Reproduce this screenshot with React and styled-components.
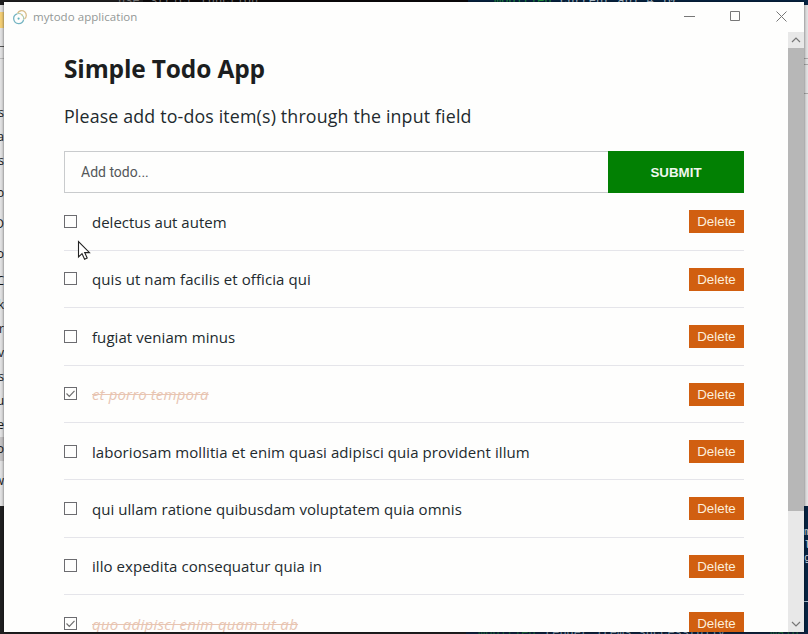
import React from "react";
import styled, { createGlobalStyle, css } from "styled-components";

const GlobalStyle = createGlobalStyle`
  *, *::before, *::after { box-sizing: border-box; }
  html, body { margin: 0; padding: 0; overflow: hidden; }
  body { font-family: "Open Sans", "Noto Sans", sans-serif; color: #222a2e; }
`;

/* The app window sits in the centre cell; thin slices of other windows frame it. */
const Desktop = styled.div`
  display: grid;
  grid-template: 2px 630px 2px / 4px 800px 4px;
  width: 808px;
  height: 634px;
  overflow: hidden;
  background: #212122;
`;

const CodeRow = styled.div`
  display: flex;
  grid-column: 1 / -1;
  overflow: hidden;
`;

const Code = styled.span`
  flex: none;
  width: ${(p) => p.$w}px;
  overflow: hidden;
  white-space: pre;
  font: 12px/2px "Liberation Mono", monospace;
  background: ${(p) => p.$bg};
  color: ${(p) => p.$color};
`;

const SideColumn = styled.div`
  display: flex;
  flex-direction: column;
  overflow: hidden;
`;

const Slice = styled.div`
  display: flex;
  align-items: center;
  flex: none;
  height: ${(p) => p.$h}px;
  overflow: hidden;
  background: ${(p) => p.$bg || "#e2e2e3"};
  justify-content: ${(p) => (p.$mono ? "flex-start" : "flex-end")};
  font: ${(p) => (p.$mono ? '11px/13px "Liberation Mono", monospace' : '12px/16px "Open Sans", sans-serif')};
  color: ${(p) => (p.$mono ? "#c8d4df" : "#161616")};
`;

const AppWindow = styled.div`
  position: relative;
  display: flex;
  flex-direction: column;
  background: #fefefd;
  overflow: hidden;
  box-shadow: 0 0 3px rgba(0, 0, 0, 0.6);
`;

const TitleBar = styled.header`
  display: flex;
  align-items: center;
  flex: none;
  height: 30px;
  padding-left: 9px;
`;

const WindowTitle = styled.span`
  flex: 1;
  margin-left: 5px;
  font-size: 11.5px;
  line-height: 16px;
  letter-spacing: 0.05px;
  color: #939896;
`;

const WindowButton = styled.button`
  display: flex;
  align-items: center;
  justify-content: center;
  width: 46px;
  height: 30px;
  padding: 0 0 2px;
  border: 0;
  background: none;
  color: #777;
`;

const Body = styled.div`
  display: flex;
  flex: 1;
  min-height: 0;
`;

const Page = styled.main`
  flex: 1;
  padding: 20px 44px 0 60px;
  overflow: hidden;
`;

const Heading = styled.h1`
  margin: 0;
  height: 36px;
  font-size: 24.5px;
  font-weight: 700;
  line-height: 33px;
  letter-spacing: -0.15px;
  color: #1c1e20;
  white-space: nowrap;
`;

const Intro = styled.p`
  margin: 13px 0 20px;
  height: 30px;
  font-size: 17.8px;
  line-height: 30px;
  letter-spacing: 0.16px;
  white-space: nowrap;
`;

const Form = styled.form`
  display: flex;
  height: 42px;
`;

const TodoInput = styled.input`
  flex: 1;
  min-width: 0;
  padding: 0 16px;
  border: 1px solid #c9cbcd;
  border-right: 0;
  border-radius: 0;
  outline: 0;
  background: #fefefd;
  font: 14px "Roboto", sans-serif;
  color: #333;
  &::placeholder { color: #54575a; opacity: 1; }
`;

const Submit = styled.button`
  width: 136px;
  padding: 0;
  border: 0;
  background: #028003;
  font: 700 13.333px "Liberation Sans", sans-serif;
  color: #f0f7ee;
`;

const List = styled.ul`
  margin: 0.4px 0 0;
  padding: 0;
  list-style: none;
`;

const Item = styled.li`
  display: flex;
  align-items: center;
  height: 57.4px;
  border-bottom: 1px solid #e5e5ea;
`;

const Check = styled.span`
  display: flex;
  align-items: center;
  justify-content: center;
  width: 13px;
  height: 13px;
  flex: none;
  border: 1px solid #6c6c70;
  color: #6e6e6e;
`;

const Label = styled.span`
  flex: 1;
  margin-left: 15px;
  padding-top: 1px;
  font-size: 15px;
  line-height: 24px;
  letter-spacing: ${(p) => p.$spacing}px;
  white-space: nowrap;
  ${(p) =>
    p.$done &&
    css`
      font-style: italic;
      color: #e8c5b2;
      text-decoration: line-through;
    `}
`;

const Delete = styled.button`
  width: 55px;
  height: 23px;
  margin-top: 0.5px;
  padding: 0;
  border: 0;
  background: #d15f10;
  font: 13.333px/23px "Liberation Sans", sans-serif;
  color: #fdeedb;
`;

const Scrollbar = styled.div`
  display: flex;
  flex-direction: column;
  width: 16px;
  background: #e8e8e8;
`;

const ScrollArrow = styled.div`
  display: flex;
  align-items: center;
  justify-content: center;
  height: 16px;
  color: #777;
`;

const Thumb = styled.div`
  height: 463px;
  margin-bottom: auto;
  background: #b7b7b7;
`;

const Pointer = styled.svg`
  position: absolute;
  left: 73px;
  top: 238px;
`;

const Logo = () => (
  <svg width="15" height="16" viewBox="0 0 15 16" fill="none">
    <path d="M4.6 4.2A4.6 4.6 0 1 1 11.4 10" stroke="#d9bd8a" strokeWidth="1.3" />
    <path d="M4.2 4.8A5 5 0 1 0 10.6 10.6" stroke="#74b4c2" strokeWidth="1.3" />
    <path d="M4.2 4.8A5 5 0 0 1 10.6 10.6" stroke="#a9c9b1" strokeWidth="1.1" />
    <circle cx="5.6" cy="9.6" r="1.1" fill="#62b2be" />
    <circle cx="8.7" cy="5.8" r=".8" fill="#e3c384" />
  </svg>
);

const Chevron = ({ down }) => (
  <svg width="10" height="8" viewBox="0 0 10 8" fill="none">
    <path d={down ? "M1 2L5 6L9 2" : "M1 6L5 2L9 6"} stroke="currentColor" strokeWidth="1.2" />
  </svg>
);

const todos = [
  { title: "delectus aut autem", spacing: 0 },
  { title: "quis ut nam facilis et officia qui", spacing: 0.09 },
  { title: "fugiat veniam minus", spacing: 0.07 },
  { title: "et porro tempora", done: true, spacing: 0.13 },
  { title: "laboriosam mollitia et enim quasi adipisci quia provident illum", spacing: 0.07 },
  { title: "qui ullam ratione quibusdam voluptatem quia omnis", spacing: 0.05 },
  { title: "illo expedita consequatur quia in", spacing: 0.05 },
  { title: "quo adipisci enim quam ut ab", done: true, spacing: 0.28 },
];

const leftSlices = [
  { h: 3, bg: "#212122" }, { h: 7 }, { h: 16, bg: "#f4cf75" }, { h: 18 }, { h: 1, bg: "#555" },
  { h: 11 }, { h: 1, bg: "#bbb" }, { h: 42 },
  { h: 24, text: "s" }, { h: 24, text: "a" }, { h: 24, text: "s" }, { h: 40, text: "b" },
  { h: 22, text: "D" }, { h: 38, text: "o" }, { h: 16, text: "C" }, { h: 32, text: "k" },
  { h: 16, text: "r" }, { h: 32, text: "v" }, { h: 16, text: "s" }, { h: 32, text: "u" },
  { h: 16, text: "e" }, { h: 4 }, { h: 24, text: "o", bg: "#c5c3c4" }, { h: 40, text: "w" }, { h: 5 },
];

const rightSlices = [
  { h: 3, bg: "#062443" }, { h: 53 }, { h: 1, bg: "#aaa" }, { h: 5 }, { h: 1, bg: "#aaa" },
  { h: 28 }, { h: 1, bg: "#aaa" }, { h: 412 }, { h: 20, bg: "#062443" },
  { h: 13, bg: "#062443", text: "m" }, { h: 13, bg: "#062443", text: "l" },
  { h: 13, bg: "#062443", text: "g" }, { h: 36, bg: "#062443" }, { h: 1, bg: "#a9c0d2" },
  { h: 30, bg: "#062443" },
];

const topCode = [
  { w: 118, bg: "#212122" },
  { w: 25, bg: "#212122", color: "#817f80", text: "use" },
  { w: 325, bg: "#0c0a0b", color: "#817f80", text: " strict function" },
  { w: 26, bg: "#062443" },
  { w: 66, bg: "#062443", color: "#249a41", text: "modified" },
  { w: 248, bg: "#062443", color: "#bccbd8", text: "current api 4 10" },
];

const bottomCode = [
  { w: 466, bg: "#212122" },
  { w: 12, bg: "#102440" },
  { w: 67, bg: "#102440", color: "#21713d", text: "modified" },
  { w: 225, bg: "#102440", color: "#91a4b7", text: "render items successfully" },
  { w: 38, bg: "#102440", color: "#21713d", text: "main" },
];

const CodeLine = ({ parts }) => (
  <CodeRow aria-hidden="true">
    {parts.map((part, i) => (
      <Code key={i} $w={part.w} $bg={part.bg} $color={part.color}>{part.text}</Code>
    ))}
  </CodeRow>
);

const Side = ({ slices, mono }) => (
  <SideColumn aria-hidden="true">
    {slices.map((slice, i) => (
      <Slice key={i} $h={slice.h} $bg={slice.bg} $mono={mono}>{slice.text}</Slice>
    ))}
  </SideColumn>
);

export default function App() {
  return (
    <Desktop>
      <GlobalStyle />
      <CodeLine parts={topCode} />
      <Side slices={leftSlices} />
      <AppWindow>
        <TitleBar>
          <Logo />
          <WindowTitle>mytodo application</WindowTitle>
          <WindowButton aria-label="Minimize">
            <svg width="11" height="11"><path d="M0 5.5H11" stroke="currentColor" /></svg>
          </WindowButton>
          <WindowButton aria-label="Maximize">
            <svg width="11" height="11" fill="none"><path d="M.5 .5H9.5V9.5H.5Z" stroke="currentColor" /></svg>
          </WindowButton>
          <WindowButton aria-label="Close">
            <svg width="11" height="11"><path d="M.5 .5L10.5 10.5M10.5 .5L.5 10.5" stroke="currentColor" /></svg>
          </WindowButton>
        </TitleBar>
        <Body>
          <Page>
            <Heading>Simple Todo App</Heading>
            <Intro>Please add to-dos item(s) through the input field</Intro>
            <Form>
              <TodoInput placeholder="Add todo..." />
              <Submit type="button">SUBMIT</Submit>
            </Form>
            <List>
              {todos.map((todo) => (
                <Item key={todo.title}>
                  <Check>
                    {todo.done && (
                      <svg width="11" height="11" fill="none">
                        <path d="M1.5 5.5L4.3 8.3L9.5 2.8" stroke="currentColor" strokeWidth="1.2" />
                      </svg>
                    )}
                  </Check>
                  <Label $done={todo.done} $spacing={todo.spacing}>{todo.title}</Label>
                  <Delete>Delete</Delete>
                </Item>
              ))}
            </List>
          </Page>
          <Scrollbar>
            <ScrollArrow><Chevron /></ScrollArrow>
            <Thumb />
            <ScrollArrow><Chevron down /></ScrollArrow>
          </Scrollbar>
        </Body>
        <Pointer width="14" height="21" viewBox="0 0 14 21">
          <path d="M1.5 1.5V17L5 13.6L7.6 19.2L10.2 18L7.7 12.6H12.5Z" fill="#fff" stroke="#222" strokeWidth="1.1" />
        </Pointer>
      </AppWindow>
      <Side slices={rightSlices} mono />
      <CodeLine parts={bottomCode} />
    </Desktop>
  );
}
